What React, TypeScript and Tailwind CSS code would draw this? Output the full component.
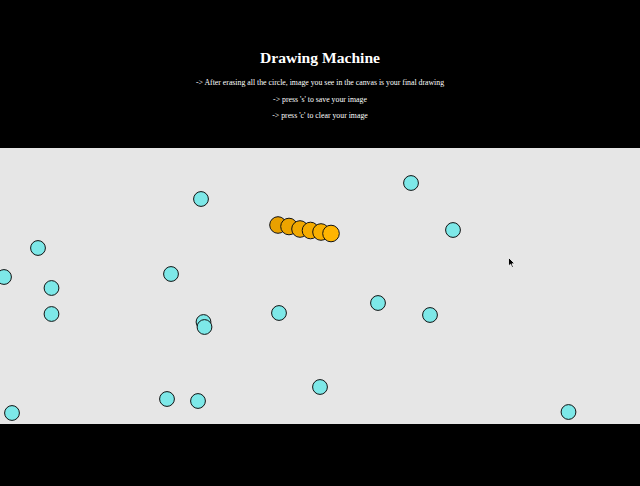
import React from 'react';

type Dot = { x: number; y: number };

const cyanDots: Dot[] = [
  { x: 201, y: 51 },
  { x: 411, y: 35 },
  { x: 453, y: 82 },
  { x: 38, y: 100 },
  { x: 4, y: 129 },
  { x: 171, y: 126 },
  { x: 51.5, y: 140 },
  { x: 51.5, y: 166 },
  { x: 203.5, y: 174 },
  { x: 204.5, y: 179 },
  { x: 279, y: 165 },
  { x: 378, y: 155 },
  { x: 430, y: 167 },
  { x: 320, y: 239 },
  { x: 167, y: 251 },
  { x: 198, y: 253 },
  { x: 12, y: 265 },
  { x: 568.5, y: 264 },
];

const orangeDots = [
  { x: 278, y: 77, c: '#e8a000' },
  { x: 289, y: 78.5, c: '#eda400' },
  { x: 300, y: 81, c: '#f1a800' },
  { x: 310.5, y: 82.5, c: '#f5ac00' },
  { x: 321, y: 84, c: '#f9b000' },
  { x: 331, y: 85.5, c: '#ffb500' },
];

const App: React.FC = () => {
  return (
    <div className="relative flex h-[486px] w-[640px] flex-col bg-black text-white" style={{ fontFamily: '"Liberation Serif", "Times New Roman", serif' }}>
      <div className="flex h-[148px] flex-col items-center pt-[47px]">
        <h1 className="text-[15.6px] font-bold leading-[22px]">Drawing Machine</h1>
        <p className="mt-[8px] text-[7.8px] leading-[11px]">-&gt; After erasing all the circle, image you see in the canvas is your final drawing</p>
        <p className="mt-[6px] text-[7.8px] leading-[11px]">-&gt; press 's' to save your image</p>
        <p className="mt-[5px] text-[7.8px] leading-[11px]">-&gt; press 'c' to clear your image</p>
      </div>

      <div className="relative h-[276px] w-[640px] bg-[#e6e6e6]">
        <svg width="640" height="276" className="block">
          {cyanDots.map((d, i) => (
            <circle key={i} cx={d.x} cy={d.y} r={7.4} fill="#7de8e8" stroke="#111" strokeWidth={1} />
          ))}
          {orangeDots.map((d, i) => (
            <circle key={'o' + i} cx={d.x} cy={d.y} r={8.3} fill={d.c} stroke="#111" strokeWidth={1} />
          ))}
        </svg>
        {/* mouse pointer */}
        <svg className="absolute left-[508px] top-[109px]" width="8" height="12" viewBox="0 0 8 12">
          <path d="M0.5 0.5 L0.5 9 L2.6 7.2 L4 10.6 L5.4 10 L4 6.8 L6.8 6.8 Z" fill="#000" stroke="#fff" strokeWidth="0.8" />
        </svg>
      </div>
    </div>
  );
};

export default App;
